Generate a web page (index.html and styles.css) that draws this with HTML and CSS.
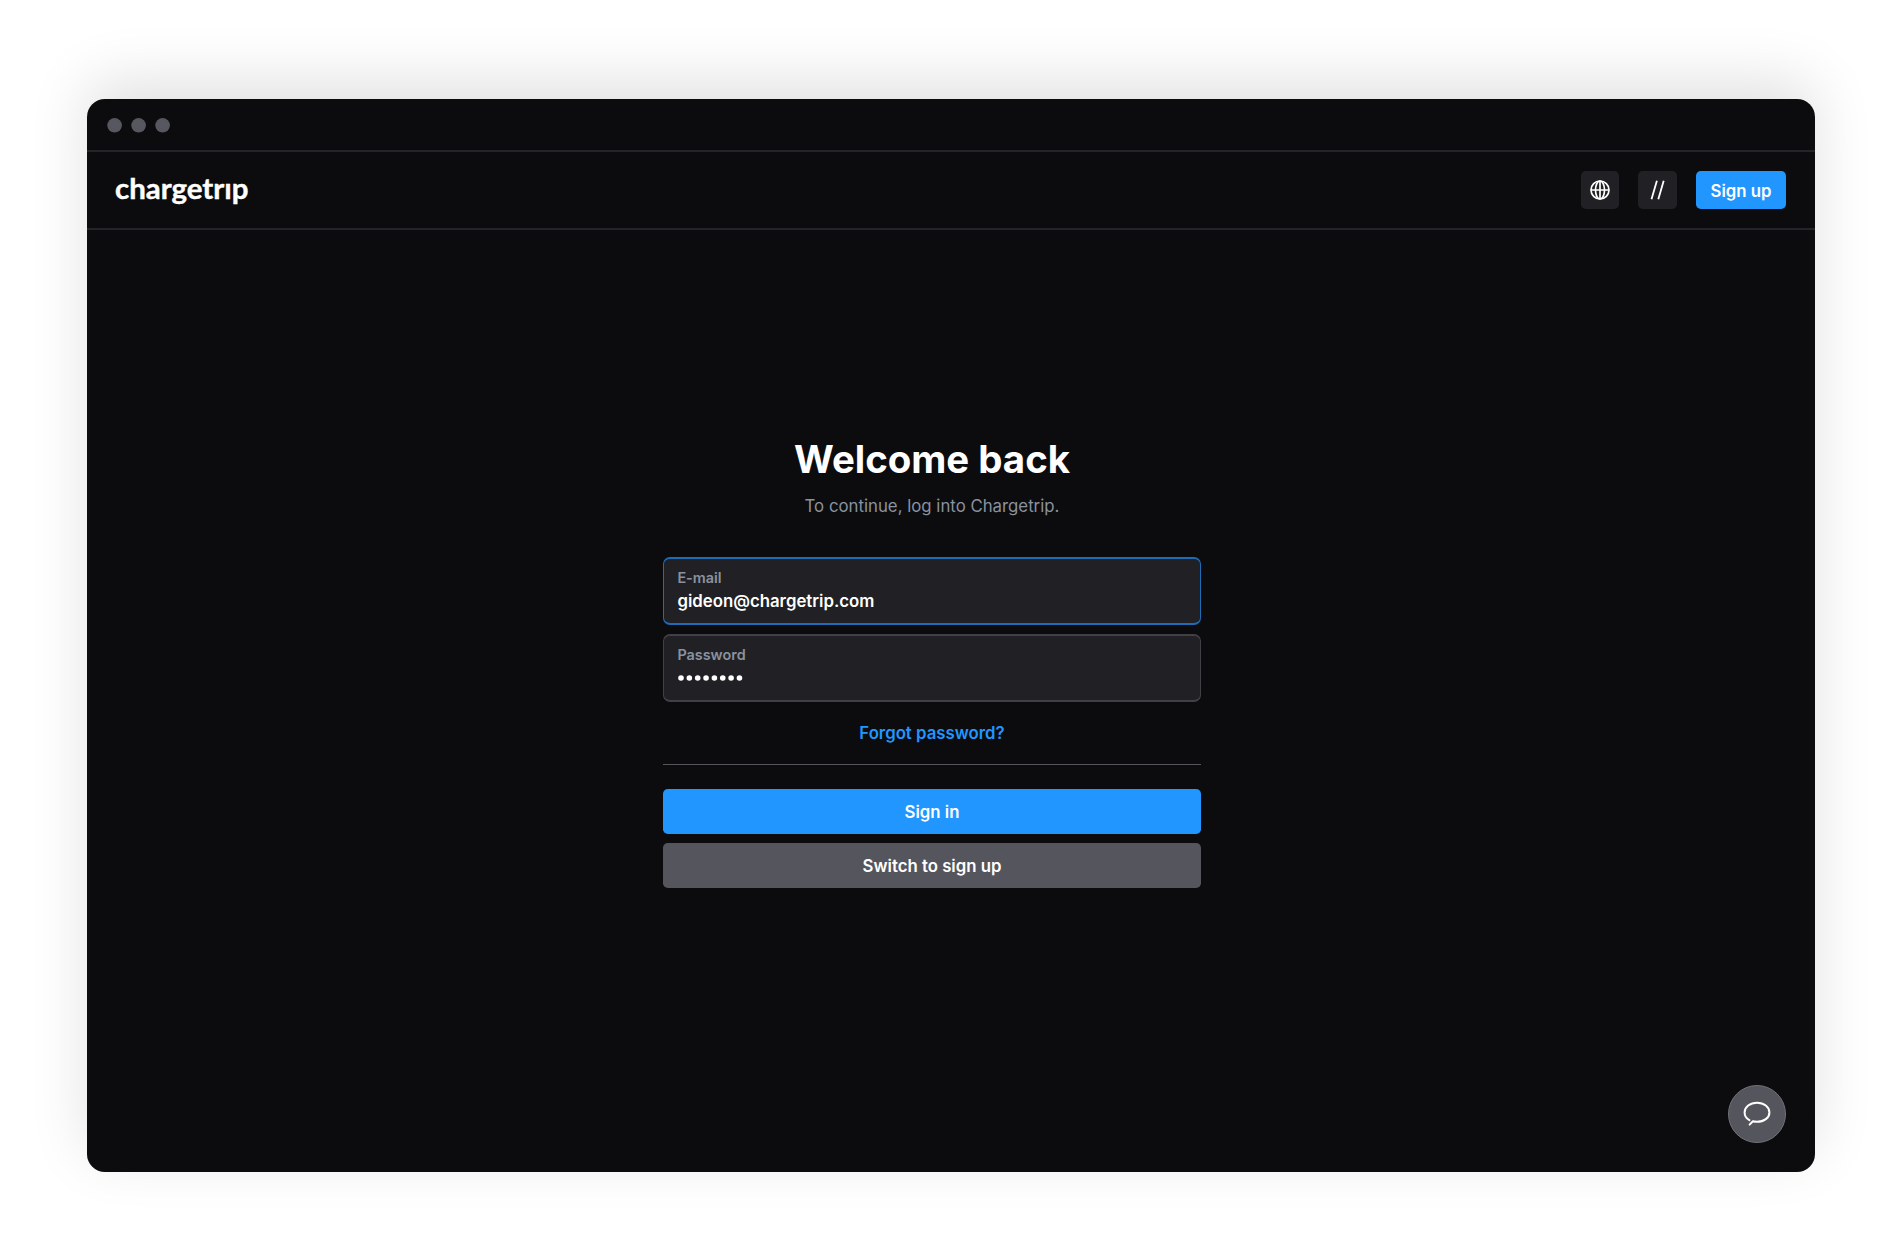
FILE: index.html
```html
<!DOCTYPE html>
<html lang="en">
<head>
<meta charset="utf-8">
<title>Chargetrip – Sign in</title>
<link rel="stylesheet" href="styles.css">
</head>
<body>
<div class="window">
  <div class="titlebar">
    <svg width="64" height="16" viewBox="0 0 64 16" fill="#57575f"><circle cx="7.600" cy="8.300" r="7.300"/><circle cx="31.600" cy="8.300" r="7.300"/><circle cx="55.600" cy="8.300" r="7.300"/></svg>
  </div>
  <header class="header">
    <svg class="logo" width="140" height="40" viewBox="0 0 140 40" role="img" aria-label="chargetrip">
      <text class="logo-text" x="0" y="28.800" textLength="133.500" lengthAdjust="spacingAndGlyphs">chargetrıp</text>
    </svg>
    <nav class="actions">
      <button class="icon-button" aria-label="Language">
        <svg width="20" height="20" viewBox="0 0 20 20" fill="none" stroke="#fff" stroke-width="1.700">
          <circle cx="10" cy="10" r="9"/><ellipse cx="10" cy="10" rx="4.500" ry="9"/><path d="M10 1v18M1 10h18"/>
        </svg>
      </button>
      <button class="icon-button" aria-label="Developers">
        <svg width="20" height="20" viewBox="0 0 20 20" fill="none" stroke="#fff" stroke-width="1.800">
          <path d="M9.900 .7 4.500 19.300M16.700 .7l-5.400 18.600"/>
        </svg>
      </button>
      <button class="signup">Sign up</button>
    </nav>
  </header>
  <main class="main">
    <form class="form">
      <h1 class="title">Welcome back</h1>
      <p class="subtitle">To continue, log into Chargetrip.</p>
      <div class="field field-active"><span class="label">E-mail</span><span class="value">gideon@chargetrip.com</span></div>
      <div class="field"><span class="label">Password</span>
        <svg class="bullets" width="68" height="8" viewBox="0 0 68 8" fill="#fff">
          <circle cx="4" cy="4" r="2.800"/><circle cx="12.350" cy="4" r="2.800"/><circle cx="20.700" cy="4" r="2.800"/><circle cx="29.050" cy="4" r="2.800"/><circle cx="37.400" cy="4" r="2.800"/><circle cx="45.750" cy="4" r="2.800"/><circle cx="54.100" cy="4" r="2.800"/><circle cx="62.450" cy="4" r="2.800"/>
        </svg>
      </div>
      <a class="forgot">Forgot password?</a>
      <hr class="divider">
      <button class="submit" type="button">Sign in</button>
      <button class="submit secondary" type="button">Switch to sign up</button>
    </form>
  </main>
  <button class="chat" aria-label="Chat">
    <svg width="28" height="26" viewBox="0 0 28 26" fill="none" stroke="#fff" stroke-width="2" stroke-linecap="round" stroke-linejoin="round">
      <path d="M6.400 19.200C3.300 17.400 1.600 14.600 1.600 11.400C1.600 6 7 1.800 14 1.800S26.400 6 26.400 11.400S21 20.800 14 20.800C12.600 20.800 11.200 20.700 9.900 20.300L6.600 23.600"/>
    </svg>
  </button>
</div>
</body>
</html>
```
FILE: styles.css
```css
* { box-sizing: border-box; }
body {
  margin: 0;
  height: 1247px;
  padding: 99px 87px 0;
  overflow: hidden;
  background: #fff;
  font-family: Inter, "Liberation Sans", sans-serif;
  color: #fff;
}
button { border: 0; padding: 0; font: inherit; color: inherit; }
.window {
  position: relative;
  width: 1728px;
  height: 1072.5px;
  border-radius: 18px;
  background: #0c0c0e;
  box-shadow: 0 -18px 60px rgba(0, 0, 0, .12);
}
.titlebar {
  height: 53px;
  display: flex;
  padding: 18px 0 0 20px;
  border-bottom: 2px solid #24242a;
}
.header {
  height: 78px;
  display: flex;
  align-items: center;
  justify-content: space-between;
  padding: 0 28.800px 0 28px;
  border-bottom: 2px solid #24242a;
}
.logo { display: block; overflow: visible; }
.logo-text {
  font: 700 29px Lato, sans-serif;
  fill: #fff;
  stroke: #fff;
  stroke-width: .4px;
}
.actions { display: flex; gap: 19.2px; }
.icon-button {
  width: 38.4px;
  height: 38.4px;
  border-radius: 4.8px;
  background: #212125;
  display: flex;
  align-items: center;
  justify-content: center;
}
.signup {
  width: 90.4px;
  height: 38.4px;
  padding-top: 1.500px;
  border-radius: 4.8px;
  background: #2196ff;
  font-size: 16.8px;
  font-weight: 600;
}
.main { display: flex; justify-content: center; padding: 206px 38px 0 0; }
.form { width: 538px; display: flex; flex-direction: column; }
.title {
  margin: 0;
  font-size: 38.4px;
  line-height: 46px;
  font-weight: 700;
  text-align: center;
}
.subtitle {
  margin: 12px 0 39px;
  font-size: 16.8px;
  line-height: 24px;
  text-align: center;
  color: #89929e;
}
.field {
  height: 68px;
  margin-bottom: 9px;
  padding: 9px 13.400px;
  border: solid #404047;
  border-width: 2px 1px;
  border-radius: 7px;
  background: #212125;
  display: flex;
  flex-direction: column;
}
.field-active { border-color: #1c6cb8; }
.label { font-size: 14.4px; line-height: 19px; font-weight: 600; color: #89929e; }
.value { font-size: 16.8px; line-height: 28px; font-weight: 600; }
.bullets { display: block; margin-top: 10px; }
.forgot {
  margin-top: 10px;
  font-size: 16.8px;
  line-height: 24px;
  font-weight: 600;
  text-align: center;
  color: #2196ff;
}
.divider { width: 100%; height: 1px; margin: 19px 0 24px; border: 0; background: #55555d; }
.submit {
  height: 44.5px;
  margin-bottom: 9.5px;
  padding-top: 1px;
  border-radius: 4.8px;
  background: #2196ff;
  font-size: 16.8px;
  font-weight: 600;
}
.secondary { background: #55555d; }
.chat {
  position: absolute;
  right: 28.800px;
  bottom: 28.500px;
  width: 58px;
  height: 58px;
  border: 1px solid #707078;
  border-radius: 50%;
  background: #55555d;
  display: flex;
  align-items: center;
  justify-content: center;
}
```
